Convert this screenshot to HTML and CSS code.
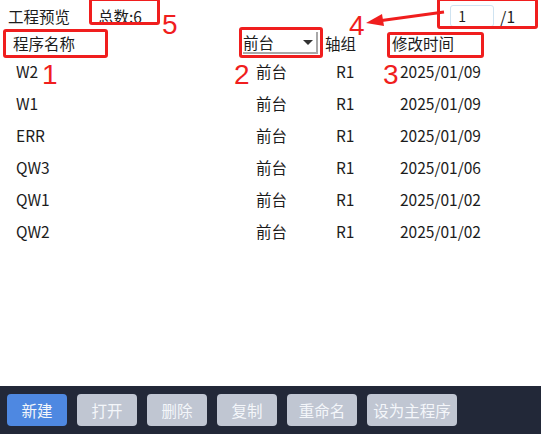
FILE: index.html
```html
<!DOCTYPE html>
<html lang="zh-CN">
<head>
    <meta charset="UTF-8">
    <title>工程预览</title>
    <link rel="stylesheet" href="styles.css">
</head>
<body>
    <div class="page">
        <div class="topbar">
            <span class="title">工程预览</span>
            <span class="total">总数:6</span>
            <div class="pager">
                <span class="page-input">1</span>
                <span class="page-count">/1</span>
            </div>
        </div>

        <div class="list-head">
            <span class="col-name">程序名称</span>
            <span class="col-type">
                <span class="dropdown">前台<span class="drop-btn"></span></span>
            </span>
            <span class="col-axis">轴组</span>
            <span class="col-date">修改时间</span>
        </div>

        <div class="list">
            <div class="row"><span>W2</span><span>前台</span><span>R1</span><span>2025/01/09</span></div>
            <div class="row"><span>W1</span><span>前台</span><span>R1</span><span>2025/01/09</span></div>
            <div class="row"><span>ERR</span><span>前台</span><span>R1</span><span>2025/01/09</span></div>
            <div class="row"><span>QW3</span><span>前台</span><span>R1</span><span>2025/01/06</span></div>
            <div class="row"><span>QW1</span><span>前台</span><span>R1</span><span>2025/01/02</span></div>
            <div class="row"><span>QW2</span><span>前台</span><span>R1</span><span>2025/01/02</span></div>
        </div>

        <div class="toolbar">
            <button class="btn primary">新建</button>
            <button class="btn">打开</button>
            <button class="btn">删除</button>
            <button class="btn">复制</button>
            <button class="btn wide">重命名</button>
            <button class="btn wider">设为主程序</button>
        </div>

        <!-- 标注层 -->
        <div class="mark box-total"></div>
        <div class="mark box-name"></div>
        <div class="mark box-type"></div>
        <div class="mark box-date"></div>
        <div class="mark box-pager"></div>
        <span class="num n1">1</span>
        <span class="num n2">2</span>
        <span class="num n3">3</span>
        <span class="num n4">4</span>
        <span class="num n5">5</span>
        <svg class="arrow" width="80" height="20" viewBox="0 0 80 20">
            <line x1="78" y1="3" x2="12" y2="12" stroke="#f01e1e" stroke-width="3"/>
            <polygon points="0,14 16,5 18,17" fill="#f01e1e"/>
        </svg>
    </div>
</body>
</html>
```

FILE: styles.css
```css
* {
    margin: 0;
    padding: 0;
    box-sizing: border-box;
}

body {
    font-family: "Noto Sans CJK SC", "Noto Sans", sans-serif;
    font-size: 15.5px;
    color: #1c1c1c;
    background: #fff;
}

.page {
    position: relative;
    width: 541px;
    height: 434px;
    display: flex;
    flex-direction: column;
}

/* 顶部 */
.topbar {
    height: 31px;
    display: flex;
    align-items: center;
    padding-left: 8px;
}

.total {
    margin-left: 28px;
}

.pager {
    margin-left: auto;
    margin-right: 26px;
    display: flex;
    align-items: center;
}

.page-input {
    width: 44px;
    height: 22px;
    line-height: 20px;
    padding-left: 7px;
    border: 1px solid #cfe3f1;
    border-radius: 3px;
    font-size: 14px;
}

.page-count {
    margin-left: 6px;
}

/* 表头 */
.list-head {
    height: 24px;
    display: grid;
    grid-template-columns: 240px 82px 64px 1fr;
    align-items: center;
    line-height: 16px;
}

.col-name {
    padding-left: 13px;
}

.col-type {
    padding-left: 3px;
}

.col-axis {
    padding-left: 3px;
}

.col-date {
    padding-left: 6px;
}

.dropdown {
    display: flex;
    align-items: center;
    width: 75px;
    height: 22px;
    border-right: 2px solid #a8a8a8;
    border-bottom: 2px solid #a8a8a8;
    background: #fff;
}

.drop-btn {
    margin-left: auto;
    margin-right: 3px;
    width: 0;
    height: 0;
    border-left: 5px solid transparent;
    border-right: 5px solid transparent;
    border-top: 5px solid #333;
}

/* 列表 */
.list {
    flex: 1;
}

.row {
    height: 32px;
    display: grid;
    grid-template-columns: 240px 82px 64px 1fr;
    align-items: center;
}

.row span:nth-child(1) {
    padding-left: 16px;
}

.row span:nth-child(2) {
    padding-left: 16px;
}

.row span:nth-child(3) {
    padding-left: 14px;
}

.row span:nth-child(4) {
    padding-left: 14px;
}

/* 底部按钮 */
.toolbar {
    height: 48px;
    background: #222838;
    display: flex;
    align-items: center;
    gap: 10px;
    padding-left: 7px;
}

.btn {
    width: 60px;
    height: 32px;
    border: none;
    border-radius: 4px;
    background: #c0c6d2;
    color: #f4f6fa;
    font-family: inherit;
    font-size: 15.5px;
}

.btn.primary {
    background: #4e88e1;
}

.btn.wide {
    width: 70px;
}

.btn.wider {
    width: 90px;
}

/* 红色标注 */
.mark {
    position: absolute;
    border: 3px solid #f01e1e;
    border-radius: 3px;
}

.box-total {
    left: 89px;
    top: -2px;
    width: 71px;
    height: 27px;
}

.box-name {
    left: 3px;
    top: 29px;
    width: 105px;
    height: 29px;
}

.box-type {
    left: 239px;
    top: 27px;
    width: 84px;
    height: 31px;
}

.box-date {
    left: 387px;
    top: 32px;
    width: 97px;
    height: 26px;
}

.box-pager {
    left: 437px;
    top: -2px;
    width: 101px;
    height: 31px;
}

.num {
    position: absolute;
    font-family: "Liberation Sans", sans-serif;
    font-size: 28px;
    line-height: 16px;
    color: #f01e1e;
}

.n1 { left: 42px; top: 67px; }
.n2 { left: 234px; top: 67px; }
.n3 { left: 383px; top: 67px; }
.n4 { left: 349px; top: 18px; }
.n5 { left: 162px; top: 17px; }

.arrow {
    position: absolute;
    left: 366px;
    top: 9px;
}
```
